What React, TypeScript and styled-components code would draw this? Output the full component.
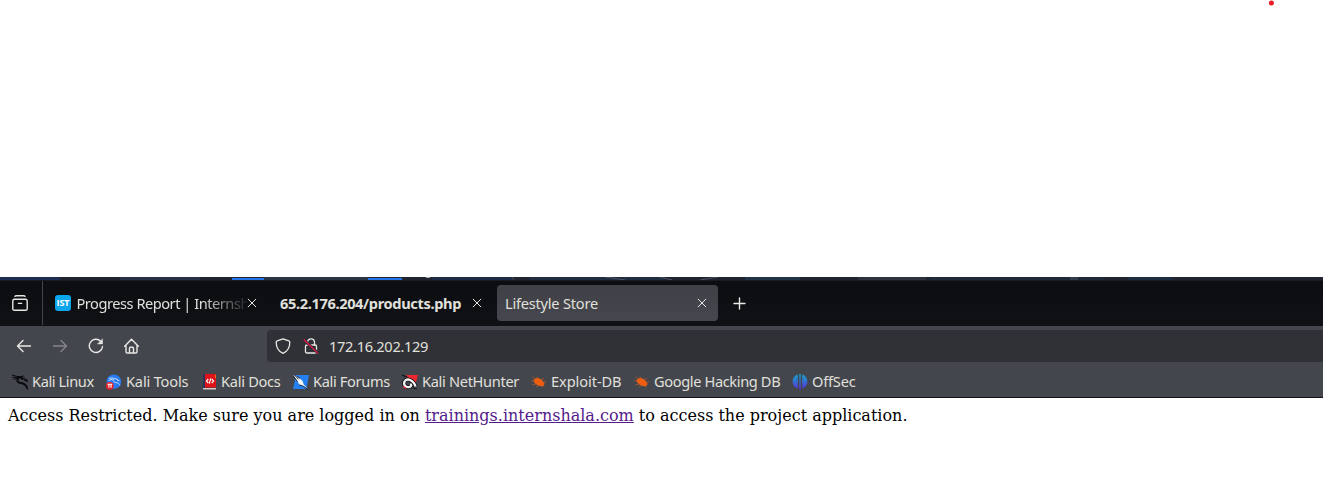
import React from 'react';
import styled, { createGlobalStyle } from 'styled-components';

const GlobalStyle = createGlobalStyle`
  * { box-sizing: border-box; }
  body { margin: 0; background: #fff; overflow: hidden; }
  svg { display: block; flex: none; }
`;

const Page = styled.div`
  width: 1323px;
  height: 503px;
  display: flex;
  flex-direction: column;
  background: #fff;
`;

const BlankArea = styled.div`
  height: 277px;
  flex: none;
  padding-left: 1268px;
`;

const Browser = styled.div`
  font-family: 'Noto Sans', sans-serif;
  font-size: 14.6px;
  color: #e0e0dc;
`;

const Desktop = styled.div`
  height: 4px;
  overflow: hidden;
  background: #202431;
`;

const TabStrip = styled.div`
  height: 45px;
  display: flex;
  align-items: center;
  padding-bottom: 1px;
  background: linear-gradient(#0b0d11, #101115);
`;

const RecentButton = styled.div`
  width: 43px;
  height: 44px;
  align-self: flex-start;
  display: flex;
  align-items: center;
  padding-left: 12px;
  border-right: 1px solid #44454b;
`;

const Tab = styled.div<{ $width: number; $active?: boolean; $bold?: boolean; $left: number }>`
  width: ${(p) => p.$width}px;
  height: 36px;
  display: flex;
  align-items: center;
  margin-left: ${(p) => (p.$active ? 4 : 0)}px;
  padding: 0 11px 0 ${(p) => p.$left}px;
  border-radius: 4px;
  background: ${(p) => (p.$active ? 'linear-gradient(#404147, #46474e)' : 'transparent')};
  font-weight: ${(p) => (p.$bold ? 700 : 400)};
`;

const TabTitle = styled.div<{ $fade?: boolean; $spacing: number }>`
  flex: 1;
  min-width: 0;
  line-height: 20px;
  white-space: nowrap;
  letter-spacing: ${(p) => p.$spacing}px;
  ${(p) => p.$fade && 'mask-image: linear-gradient(to right, #000 125px, transparent 174px);'}
`;

const SiteBadge = styled.div`
  width: 16px;
  height: 16px;
  flex: none;
  margin-right: 5.5px;
  border-radius: 3px;
  background: #0ba5ec;
  color: #fff;
  font: 700 9px/16px 'Open Sans', sans-serif;
  text-align: center;
`;

const NewTab = styled.div`
  margin-left: 15px;
  padding-top: 1px;
`;

const Toolbars = styled.div`
  height: 72px;
  background: #44464d;
  border-bottom: 1px solid #101116;
`;

const NavRow = styled.div`
  height: 40px;
  display: flex;
  align-items: center;
`;

const NavButtons = styled.div`
  width: 267px;
  display: flex;
  gap: 20px;
  padding-left: 16px;
`;

const AddressBar = styled.div`
  flex: 1;
  height: 32px;
  display: flex;
  align-items: center;
  gap: 12px;
  padding-left: 8px;
  border-radius: 4px 0 0 4px;
  background: #303136;
`;

const Address = styled.div`
  margin-left: -2px;
  line-height: 20px;
  letter-spacing: -0.32px;
`;

const Bookmarks = styled.div`
  height: 31px;
  display: flex;
  align-items: center;
  padding: 1px 0 0 12px;
`;

const Bookmark = styled.div<{ $width: number; $spacing: number }>`
  width: ${(p) => p.$width}px;
  display: flex;
  align-items: center;
  gap: 4px;
  white-space: nowrap;
  letter-spacing: ${(p) => p.$spacing}px;
`;

const BookmarkLabel = styled.span`
  padding-bottom: 2px;
  line-height: 20px;
`;

const Content = styled.p`
  margin: 0;
  padding: 8px;
  font: 16px/19px 'DejaVu Serif', serif;
  color: #000;
  white-space: nowrap;
`;

const Visited = styled.a`
  color: #551a8b;
  text-decoration: underline;
`;

const stroke = { fill: 'none', stroke: '#e8e8e4', strokeWidth: 1.4, strokeLinecap: 'round', strokeLinejoin: 'round' } as const;

const Close = () => (
  <svg width="10" height="10" viewBox="0 0 10 10" {...stroke} strokeWidth={1}>
    <path d="M1.2 1.2l7.6 7.6M8.8 1.2L1.2 8.8" />
  </svg>
);

const Wallpaper = () => (
  <svg width="1323" height="4">
    <rect width="60" height="4" fill="#1d2d50" />
    <rect x="120" width="80" height="4" fill="#263044" />
    <rect x="264" width="104" height="3" fill="#2b3445" />
    <rect x="432" width="80" height="3" fill="#1c2a46" />
    <rect x="530" width="135" height="3" fill="#202d40" />
    <path d="M512 0l2 3M605 0l20 3M660 0l12 3M700 3l18-3" stroke="#4b5361" />
    <rect x="745" width="55" height="3" fill="#203246" />
    <rect x="858" width="68" height="3" fill="#30313f" />
    <rect x="930" width="175" height="3" fill="#20293a" />
    <rect x="1070" width="8" height="3" fill="#343b49" />
    <rect x="1128" width="45" height="3" fill="#1d2c41" />
    <rect x="232" y="1" width="32" height="2" fill="#2673e8" />
    <rect x="368" y="1" width="34" height="2" fill="#2673e8" />
    <path d="M425 0q3 1.6 6 0z" fill="#fff" />
    <rect y="3" width="1323" height="1" fill="#151c23" />
  </svg>
);

const Dragon = () => (
  <svg width="16" height="16" viewBox="0 0 16 16" fill="none" stroke="#090a0c" strokeLinecap="round">
    <path d="M.4 1.2l6 1.6M.6 3.5l6-.5M2 5.3l5-1.6" strokeWidth="1" />
    <path d="M6 2.8c3 0 4 1 4.4 2.4M7 4c-3 2-2 4.5 1.8 5 3.6.5 5.6 2 6.6 5.5" strokeWidth="1.8" />
    <path d="M10 4l4 1.2 1.5 2-3-1M7 3l5-1" strokeWidth="1.1" />
  </svg>
);

const ToolsIcon = () => (
  <svg width="16" height="16" viewBox="0 0 16 16">
    <circle cx="7.9" cy="7.7" r="7.3" fill="#287bf0" />
    <path d="M3 4.4l4-.6M2.5 6.4l5.5-1.7c2.6-.4 3.6.8 4.1 1.8M8 5.2c-1.7 1.5 0 3.2 2 3.4 2.2.2 3.6 1.5 3.8 2.7M10.5 5.5l3 1.4" fill="none" stroke="#cfe3ff" strokeWidth=".9" />
    <circle cx="3.8" cy="11.8" r="3.9" fill="#e3202b" />
    <path d="M1.6 10.3h4.6M2.9 10.3v3.5M5.1 10.3v3.5" stroke="#fff" strokeWidth="1.1" />
  </svg>
);

const DocsIcon = () => (
  <svg width="16" height="16" viewBox="0 0 16 16">
    <path d="M2 0h2v14H2z" fill="#28345c" />
    <path d="M4 0h11v13.5H4z" fill="#de1218" />
    <path d="M14 1h1v3h-1z" fill="#ee7420" />
    <path d="M2 14h13v1.5H2z" fill="#d6c9c4" />
    <path d="M7.3 5L5.4 7l1.9 2M10.7 5l1.9 2-1.9 2M9.7 4.5L8.3 9.6" fill="none" stroke="#fff" strokeWidth="1.1" />
  </svg>
);

const ForumsIcon = () => (
  <svg width="16" height="16" viewBox="0 0 16 16">
    <path d="M2 1h14l-2.6 14H0l1.8-8z" fill="#2480ef" />
    <path d="M0 .8l5 2.5 4.5 3.5 1.2 3.6L15 14.8l-5.5-3.2-3.2-.8-1.5-3z" fill="#f5f5f5" />
    <path d="M0 1.6l4.5 6M1.2.6l4.3 4.8M4 2.4l3 1.9M6.3 10.8l4 1.5 4.7 3" fill="none" stroke="#1e2028" strokeWidth=".9" />
  </svg>
);

const HunterIcon = () => (
  <svg width="16" height="16" viewBox="0 0 16 16">
    <path d="M4 1h12l-3 11z" fill="#ed2630" />
    <path d="M0 1l5 2M11 14l4 1" stroke="#111217" strokeWidth="1.2" />
    <path d="M13.5 12.5C11.5 6 5 3.5 2.5 7.5c-1.5 4 2 6.6 5.5 5.2 1.6-.7 1.6-2 .2-2.6" fill="none" stroke="#111217" strokeWidth="4" />
    <path d="M13.5 12.5C11.5 6 5 3.5 2.5 7.5c-1.5 4 2 6.6 5.5 5.2 1.6-.7 1.6-2 .2-2.6" fill="none" stroke="#f5f3f2" strokeWidth="2.3" />
    <path d="M1 12.5l3 2" stroke="#e92631" strokeWidth="1.3" />
  </svg>
);

const BugIcon = () => (
  <svg width="16" height="16" viewBox="0 0 16 16">
    <path d="M2.8 5.8C5.2 3 9 3.8 11.3 6.5l2.4 3.3-1.5 2.4C8.4 12.6 4.6 10.6 2.8 8z" fill="#ee5e10" />
    <path d="M4.5 5L1.5 3M3 7L.3 6.8M5.5 10l-4 .8M7.3 4.5L5.8 2.5M10 6l3-1.8M12 8l3.2-.3M8 11.3l-3 1.5M10.5 12l1.2 1.3" stroke="#a95a30" strokeWidth=".8" />
  </svg>
);

const OffsecIcon = () => (
  <svg width="16" height="16" viewBox="0 0 16 16">
    <defs>
      <linearGradient id="offsec" x1="0" y1="0" x2="0" y2="1">
        <stop offset="0" stopColor="#13a8c9" />
        <stop offset="1" stopColor="#5c2bdc" />
      </linearGradient>
    </defs>
    <path d="M5.8.5v14C2.5 13.3.6 11 .6 7.5S2.5 1.7 5.8.5zM7.3 0h1.4v16l-1.4-.7zM10.2.5c3.3 1.2 5.2 3.5 5.2 7s-1.9 5.8-5.2 7z" fill="url(#offsec)" />
  </svg>
);

const bookmarks = [
  { label: 'Kali Linux', width: 94, spacing: -0.4, Icon: Dragon },
  { label: 'Kali Tools', width: 95, spacing: -0.17, Icon: ToolsIcon },
  { label: 'Kali Docs', width: 92, spacing: -0.28, Icon: DocsIcon },
  { label: 'Kali Forums', width: 109, spacing: -0.34, Icon: ForumsIcon },
  { label: 'Kali NetHunter', width: 129, spacing: -0.32, Icon: HunterIcon },
  { label: 'Exploit-DB', width: 103, spacing: -0.08, Icon: BugIcon },
  { label: 'Google Hacking DB', width: 158, spacing: -0.37, Icon: BugIcon },
  { label: 'OffSec', width: 70, spacing: -0.2, Icon: OffsecIcon },
];

export default function App() {
  return (
    <Page>
      <GlobalStyle />
      <BlankArea>
        <svg width="6" height="6"><circle cx="3.4" cy="3" r="2.5" fill="#ed1c24" /></svg>
      </BlankArea>
      <Browser>
        <Desktop><Wallpaper /></Desktop>
        <TabStrip>
          <RecentButton>
            <svg width="16" height="16" viewBox="0 0 16 16" {...stroke}>
              <path d="M3 1.5Q3 .7 4 .7h8q1 0 1 .8M6.4 8.4h3.2" />
              <rect x=".8" y="4.3" width="14.4" height="11" rx="1.6" />
            </svg>
          </RecentButton>
          <Tab $width={225} $left={12}>
            <SiteBadge>IST</SiteBadge>
            <TabTitle $fade $spacing={-0.47}>Progress Report | Internsh</TabTitle>
            <Close />
          </Tab>
          <Tab $width={225} $left={12} $bold>
            <TabTitle $spacing={-0.36}>65.2.176.204/products.php</TabTitle>
            <Close />
          </Tab>
          <Tab $width={221} $left={8} $active>
            <TabTitle $spacing={-0.22}>Lifestyle Store</TabTitle>
            <Close />
          </Tab>
          <NewTab>
            <svg width="13" height="13" viewBox="0 0 13 13" {...stroke}><path d="M6.5 1v11M1 6.5h11" /></svg>
          </NewTab>
        </TabStrip>
        <Toolbars>
          <NavRow>
            <NavButtons>
              <svg width="16" height="16" viewBox="0 0 16 16" {...stroke}><path d="M14.5 8h-13M7 2.5L1.5 8 7 13.5" /></svg>
              <svg width="16" height="16" viewBox="0 0 16 16" {...stroke} stroke="#85868a"><path d="M1.5 8h13M9 2.5L14.5 8 9 13.5" /></svg>
              <svg width="16" height="16" viewBox="0 0 16 16" {...stroke}><path d="M14.5 8.5a6.6 6.6 0 1 1-1.8-5.2" /><path d="M14.5 1.2v4.7H9.8z" fill="#e8e8e4" strokeWidth=".5" /></svg>
              <svg width="16" height="16" viewBox="0 0 16 16" {...stroke}><path d="M.7 8.2L7.5 1.2l6.8 7M2 7.4v6.4q0 1.2 1.2 1.2h8.6q1.2 0 1.2-1.2V7.4M5.5 14.7V10.3q0-1 1-1h2q1 0 1 1v4.4" /></svg>
            </NavButtons>
            <AddressBar>
              <svg width="16" height="16" viewBox="0 0 16 16" {...stroke} strokeWidth={1.3}><path d="M8 .8l5.8 2.1q1 .4 1 1.4c0 5-2 9-6.8 11-4.8-2-6.8-6-6.8-11q0-1 1-1.4z" /></svg>
              <svg width="16" height="16" viewBox="0 0 16 16" {...stroke} strokeWidth={1.3}>
                <path d="M4.5 7V4.5C4.5-.4 11.5-.4 11.5 4.5V7" /><rect x="2.5" y="7" width="11" height="8" rx="1.3" />
                <path d="M1 2l14 13" stroke="#303136" strokeWidth="3" /><path d="M1.2 1.7l13.5 13.4" stroke="#df1747" />
              </svg>
              <Address>172.16.202.129</Address>
            </AddressBar>
          </NavRow>
          <Bookmarks>
            {bookmarks.map(({ label, width, spacing, Icon }) => (
              <Bookmark key={label} $width={width} $spacing={spacing}>
                <Icon />
                <BookmarkLabel>{label}</BookmarkLabel>
              </Bookmark>
            ))}
          </Bookmarks>
        </Toolbars>
      </Browser>
      <Content>
        Access Restricted. Make sure you are logged in on <Visited>trainings.internshala.com</Visited> to access the project application.
      </Content>
    </Page>
  );
}
